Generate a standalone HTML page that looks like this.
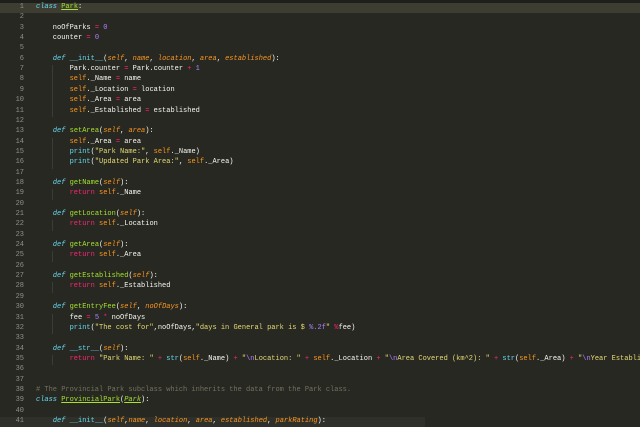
<!DOCTYPE html>
<html><head><meta charset="utf-8"><style>
html,body{margin:0;padding:0;background:#272822;width:640px;height:425px;overflow:hidden}
.top{position:absolute;left:0;top:0;width:640px;height:3px;background:#1e1f1a}
.ln{position:absolute;left:0;width:24px;text-align:right;color:#8f908a;font:7px "Liberation Mono",monospace}
.cd{position:absolute;left:36px;white-space:pre;color:#f8f8f2;font:7px "Liberation Mono",monospace;letter-spacing:0}
.row{position:absolute;left:0;width:640px;height:10.35px;line-height:10.35px}
.hl{background:#3e3d32}
.k{color:#f92672}.d{color:#66d9ef;font-style:italic}.f{color:#a6e22e}.fu{color:#a6e22e;text-decoration:underline}
.p{color:#fd971f;font-style:italic}.sf{color:#fd971f}.s{color:#e6db74}.n{color:#ae81ff}.c{color:#75715e}.b{color:#66d9ef}
.g{position:absolute;width:1px;background:#3b3c35}
</style></head><body>
<div class="top"></div>
<div id="w"></div>
<script>
var L=[
'<span class="d">class</span> <span class="fu">Park</span>:',
'',
'    noOfParks <span class="k">=</span> <span class="n">0</span>',
'    counter <span class="k">=</span> <span class="n">0</span>',
'',
'    <span class="d">def</span> <span class="b">__init__</span>(<span class="p">self</span>, <span class="p">name</span>, <span class="p">location</span>, <span class="p">area</span>, <span class="p">established</span>):',
'        Park.counter <span class="k">=</span> Park.counter <span class="k">+</span> <span class="n">1</span>',
'        <span class="sf">self</span>._Name <span class="k">=</span> name',
'        <span class="sf">self</span>._Location <span class="k">=</span> location',
'        <span class="sf">self</span>._Area <span class="k">=</span> area',
'        <span class="sf">self</span>._Established <span class="k">=</span> established',
'',
'    <span class="d">def</span> <span class="f">setArea</span>(<span class="p">self</span>, <span class="p">area</span>):',
'        <span class="sf">self</span>._Area <span class="k">=</span> area',
'        <span class="b">print</span>(<span class="s">"Park Name:"</span>, <span class="sf">self</span>._Name)',
'        <span class="b">print</span>(<span class="s">"Updated Park Area:"</span>, <span class="sf">self</span>._Area)',
'',
'    <span class="d">def</span> <span class="f">getName</span>(<span class="p">self</span>):',
'        <span class="k">return</span> <span class="sf">self</span>._Name',
'',
'    <span class="d">def</span> <span class="f">getLocation</span>(<span class="p">self</span>):',
'        <span class="k">return</span> <span class="sf">self</span>._Location',
'',
'    <span class="d">def</span> <span class="f">getArea</span>(<span class="p">self</span>):',
'        <span class="k">return</span> <span class="sf">self</span>._Area',
'',
'    <span class="d">def</span> <span class="f">getEstablished</span>(<span class="p">self</span>):',
'        <span class="k">return</span> <span class="sf">self</span>._Established',
'',
'    <span class="d">def</span> <span class="f">getEntryFee</span>(<span class="p">self</span>, <span class="p">noOfDays</span>):',
'        fee <span class="k">=</span> <span class="n">5</span> <span class="k">*</span> noOfDays',
'        <span class="b">print</span>(<span class="s">"The cost for"</span>,noOfDays,<span class="s">"days in General park is $ <span class="n">%.2f</span>"</span> <span class="k">%</span>fee)',
'',
'    <span class="d">def</span> <span class="b">__str__</span>(<span class="p">self</span>):',
'        <span class="k">return</span> <span class="s">"Park Name: "</span> <span class="k">+</span> <span class="b">str</span>(<span class="sf">self</span>._Name) <span class="k">+</span> <span class="s">"<span class="n">\\n</span>Location: "</span> <span class="k">+</span> <span class="sf">self</span>._Location <span class="k">+</span> <span class="s">"<span class="n">\\n</span>Area Covered (km^2): "</span> <span class="k">+</span> <span class="b">str</span>(<span class="sf">self</span>._Area) <span class="k">+</span> <span class="s">"<span class="n">\\n</span>Year Establi</span>',
'',
'',
'<span class="c"># The Provincial Park subclass which inherits the data from the Park class.</span>',
'<span class="d">class</span> <span class="fu">ProvincialPark</span>(<span class="fu" style="font-style:italic">Park</span>):',
'',
'    <span class="d">def</span> <span class="b">__init__</span>(<span class="p">self</span>,<span class="p">name</span>, <span class="p">location</span>, <span class="p">area</span>, <span class="p">established</span>, <span class="p">parkRating</span>):'
];
var h='',lh=10.35,t0=3;
for(var i=0;i<L.length;i++){
 var y=t0+i*lh;
 var cls=(i==0)?' hl':'';
 var st=(i==40)?'background:#2f302a;width:425px;':'';
 h+='<div class="row'+cls+'" style="top:'+y+'px;'+st+'"><span class="ln">'+(i+1)+'</span><span class="cd">'+L[i]+'</span></div>';
}
var blocks=[[6,11],[13,16],[18,19],[21,22],[24,25],[27,28],[30,32],[34,35]];
blocks.forEach(function(b){h+='<div class="g" style="left:52px;top:'+(t0+b[0]*lh)+'px;height:'+((b[1]-b[0])*lh)+'px"></div>';});
document.getElementById('w').innerHTML=h;
</script>
</body></html>
